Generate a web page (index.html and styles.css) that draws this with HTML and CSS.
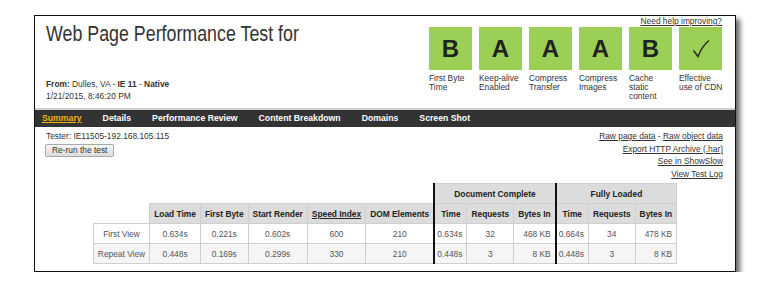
FILE: index.html
```html
<!DOCTYPE html>
<html>
	<head>
		<meta http-equiv="Content-Type" content="text/html; charset=UTF-8" />
		<title>Web Page Performance Test</title>
		<link rel="stylesheet" href="styles.css">
	</head>

	<body>
		<div class="frame">
			<div class="header">
				<div class="test-info">
					<h1>Web Page Performance Test for</h1>
					<p class="from"><b>From:</b> Dulles, VA - <b>IE 11</b> - <b>Native</b></p>
					<p class="date">1/21/2015, 8:46:20 PM</p>
				</div>

				<div class="grades-wrap">
					<a class="help" href="#">Need help improving?</a>
					<ul class="grades">
						<li><div class="grade">B</div><span>First Byte Time</span></li>
						<li><div class="grade">A</div><span>Keep-alive Enabled</span></li>
						<li><div class="grade">A</div><span>Compress Transfer</span></li>
						<li><div class="grade">A</div><span>Compress Images</span></li>
						<li><div class="grade">B</div><span>Cache static content</span></li>
						<li>
							<div class="grade">
								<svg width="20" height="20" viewBox="0 0 20 20"><path d="M2.5 11.5 L7 17.5 C9.5 11 13 5.5 18 1.5" fill="none" stroke="#222" stroke-width="1.4"/></svg>
							</div>
							<span>Effective use of CDN</span>
						</li>
					</ul>
				</div>
			</div>

			<nav class="tabs">
				<a class="active" href="#">Summary</a>
				<a href="#">Details</a>
				<a href="#">Performance Review</a>
				<a href="#">Content Breakdown</a>
				<a href="#">Domains</a>
				<a href="#">Screen Shot</a>
			</nav>

			<div class="meta">
				<div class="tester">
					<p>Tester: IE11505-192.168.105.115</p>
					<button>Re-run the test</button>
				</div>
				<div class="links">
					<p><a href="#">Raw page data</a> - <a href="#">Raw object data</a></p>
					<p><a href="#">Export HTTP Archive (.har)</a></p>
					<p><a href="#">See in ShowSlow</a></p>
					<p><a href="#">View Test Log</a></p>
				</div>
			</div>

			<table class="results">
				<tr>
					<td class="blank" colspan="6"></td>
					<th class="group" colspan="3">Document Complete</th>
					<th class="group" colspan="3">Fully Loaded</th>
				</tr>
				<tr>
					<td class="blank"></td>
					<th>Load Time</th>
					<th>First Byte</th>
					<th>Start Render</th>
					<th><u>Speed Index</u></th>
					<th>DOM Elements</th>
					<th class="split">Time</th>
					<th>Requests</th>
					<th>Bytes In</th>
					<th class="split">Time</th>
					<th>Requests</th>
					<th>Bytes In</th>
				</tr>
				<tr>
					<td>First View</td>
					<td>0.634s</td>
					<td>0.221s</td>
					<td>0.602s</td>
					<td>600</td>
					<td>210</td>
					<td class="split">0.634s</td>
					<td>32</td>
					<td class="bytes">468 KB</td>
					<td class="split">0.664s</td>
					<td>34</td>
					<td class="bytes">478 KB</td>
				</tr>
				<tr class="repeat">
					<td>Repeat View</td>
					<td>0.448s</td>
					<td>0.169s</td>
					<td>0.299s</td>
					<td>330</td>
					<td>210</td>
					<td class="split">0.448s</td>
					<td>3</td>
					<td class="bytes">8 KB</td>
					<td class="split">0.448s</td>
					<td>3</td>
					<td class="bytes">8 KB</td>
				</tr>
			</table>
		</div>
	</body>
</html>
```

FILE: styles.css
```css
body {
	margin: 0;
	background: #fff;
	font-family: "Liberation Sans", Arial, sans-serif;
	font-size: 8.4px;
	color: #333;
}
p {
	margin: 0;
}
a {
	color: #333;
}
div.frame {
	margin: 15px 0 0 34px;
	width: 700px;
	height: 255px;
	border: 1px solid #111;
	box-shadow: 4px 4px 5px rgba(0, 0, 0, 0.6);
}

div.header {
	display: flex;
	justify-content: space-between;
	height: 92px;
	padding: 0 12px 0 11px;
	border-bottom: 2px solid #cfcfcf;
}
h1 {
	margin: 5px 0 0;
	font-size: 22px;
	font-weight: normal;
	line-height: 26px;
	color: #333;
	white-space: nowrap;
	transform: scaleX(0.81);
	transform-origin: left center;
}
p.from {
	margin-top: 31px;
	line-height: 12px;
}
p.date {
	line-height: 12px;
}

div.grades-wrap {
	display: flex;
	flex-direction: column;
	align-items: flex-end;
}
a.help {
	line-height: 10px;
	margin-right: 1px;
}
ul.grades {
	display: flex;
	gap: 6px;
	margin: 1px 0 0;
	padding: 0;
	list-style: none;
}
ul.grades li {
	width: 44px;
}
div.grade {
	display: flex;
	align-items: center;
	justify-content: center;
	width: 43px;
	height: 43px;
	background-color: #9bcf55;
	color: #222;
	font-size: 24px;
	font-weight: bold;
}
ul.grades span {
	display: block;
	margin-top: 3.5px;
	line-height: 9px;
}

nav.tabs {
	display: flex;
	gap: 21px;
	height: 17px;
	padding-left: 7px;
	background-color: #333;
}
nav.tabs a {
	color: #fff;
	font-size: 8.7px;
	font-weight: bold;
	line-height: 17px;
	text-decoration: none;
}
nav.tabs a.active {
	color: #eeb211;
	text-decoration: underline;
}

div.meta {
	display: flex;
	justify-content: space-between;
	height: 53px;
	padding: 3px 12px 0 11px;
}
div.tester p {
	line-height: 12.6px;
}
button {
	margin: 1px 0 0 -1px;
	height: 13.5px;
	padding: 0 6px;
	border: 1px solid #aaa;
	border-radius: 2px;
	background: linear-gradient(#f6f6f6, #dcdcdc);
	color: #333;
	font-family: "Liberation Sans", Arial, sans-serif;
	font-size: 8.4px;
	line-height: 11px;
}
div.links {
	text-align: right;
	line-height: 12.6px;
}

table.results {
	margin: 0 auto;
	border-collapse: collapse;
}
table.results td,
table.results th {
	height: 19px;
	padding: 0 4px;
	border: 1px solid #cfcfcf;
	text-align: center;
	white-space: nowrap;
}
table.results th {
	background-color: #dcdcdc;
	color: #222;
	font-weight: bold;
}
table.results td {
	color: #555;
}
table.results td.blank {
	border: none;
}
table.results .group,
table.results .split {
	border-left: 2px solid #111;
}
table.results td.split {
	text-align: left;
	padding-left: 2px;
}
table.results td.bytes {
	text-align: right;
}
table.results tr.repeat td {
	background-color: #f5f5f5;
}
```
